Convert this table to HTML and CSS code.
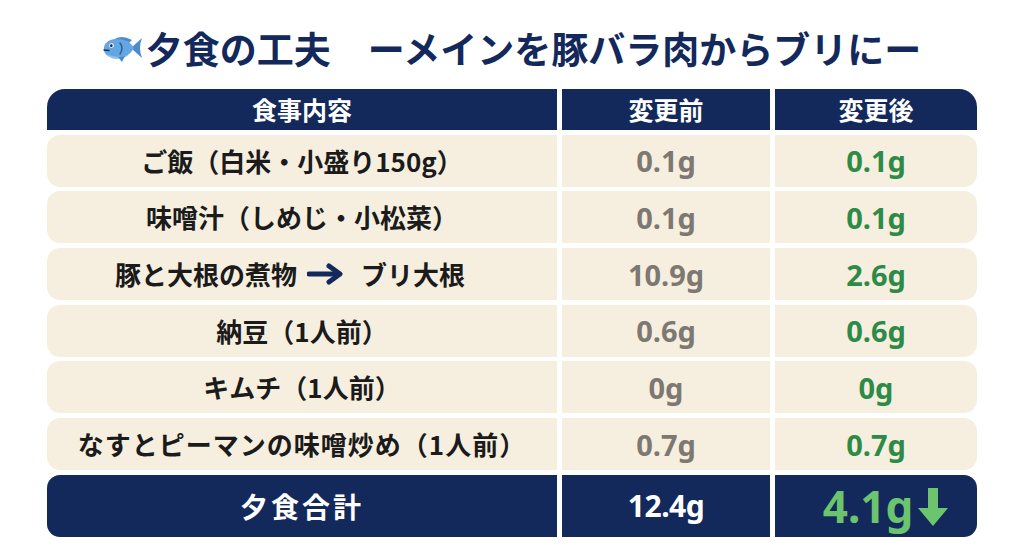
FILE: index.html
```html
<!DOCTYPE html>
<html lang="ja">
<head>
<meta charset="utf-8">
<title>夕食の工夫</title>
<link rel="stylesheet" href="styles.css">
</head>
<body>
<div class="page">
  <h1 class="title">
    <svg class="fish" viewBox="0 0 40 28" width="40" height="28" aria-hidden="true">
      <path d="M28 14 L39 4 Q35 14 39 24 Z" fill="#4a8bcc"/>
      <path d="M10 6 Q18 0 29 6 L26 9 L12 9 Z" fill="#4a8bcc"/>
      <path d="M1 13 Q3 5 14 5 Q26 5 31 14 Q26 24 14 24 Q3 24 1 17 Z" fill="#64a6e2"/>
      <path d="M4 20 Q12 25 26 21 Q20 25 12 25 Q6 24 4 20 Z" fill="#8fc0ec"/>
      <path d="M15 23 L19 28 L22 22 Z" fill="#4a8bcc"/>
      <path d="M17 9 Q21 14 17 20" stroke="#2c5f99" stroke-width="1.5" fill="none" stroke-linecap="round"/>
      <circle cx="8.5" cy="11.5" r="2.3" fill="#ffffff"/>
      <circle cx="8.3" cy="11.7" r="1.4" fill="#1b2d4a"/>
      <path d="M1 16 L6 16.5" stroke="#1b2d4a" stroke-width="1.3" stroke-linecap="round"/>
    </svg>
    <span>夕食の工夫　ーメインを豚バラ肉からブリにー</span>
  </h1>

  <div class="table">
    <div class="cell hd c1">食事内容</div>
    <div class="cell hd">変更前</div>
    <div class="cell hd c3">変更後</div>

    <div class="cell c1 item">ご飯（白米・小盛り150g）</div>
    <div class="cell num before">0.1g</div>
    <div class="cell c3 num after">0.1g</div>

    <div class="cell c1 item">味噌汁（しめじ・小松菜）</div>
    <div class="cell num before">0.1g</div>
    <div class="cell c3 num after">0.1g</div>

    <div class="cell c1 item swap">豚と大根の煮物<svg class="rarrow" viewBox="0 0 38 22" width="38" height="22" aria-hidden="true"><path d="M2 11 H30" stroke="#13295b" stroke-width="5" stroke-linecap="round"/><path d="M22 3 L33 11 L22 19" stroke="#13295b" stroke-width="5" fill="none" stroke-linecap="round" stroke-linejoin="round"/></svg>ブリ大根</div>
    <div class="cell num before">10.9g</div>
    <div class="cell c3 num after">2.6g</div>

    <div class="cell c1 item">納豆（1人前）</div>
    <div class="cell num before">0.6g</div>
    <div class="cell c3 num after">0.6g</div>

    <div class="cell c1 item">キムチ（1人前）</div>
    <div class="cell num before">0g</div>
    <div class="cell c3 num after">0g</div>

    <div class="cell c1 item wide">なすとピーマンの味噌炒め（1人前）</div>
    <div class="cell num before">0.7g</div>
    <div class="cell c3 num after">0.7g</div>

    <div class="cell total c1 total-label">夕食合計</div>
    <div class="cell total num total-before">12.4g</div>
    <div class="cell total c3 num total-after">4.1g<svg class="darrow" viewBox="0 0 32 40" width="32" height="40" aria-hidden="true"><path d="M11 1 H21 V21 H31 L16 39 L1 21 H11 Z" fill="#6cc46e"/></svg></div>
  </div>
</div>
</body>
</html>
```

FILE: styles.css
```css
* {
  box-sizing: border-box;
}

body {
  margin: 0;
  background: #ffffff;
  font-family: "Noto Sans CJK JP", "Noto Sans", sans-serif;
}

.page {
  width: 1024px;
  height: 559px;
  overflow: hidden;
}

.title {
  margin: 0;
  height: 89px;
  padding-top: 8px;
  display: flex;
  justify-content: center;
  align-items: center;
  gap: 3px;
  font-size: 37px;
  line-height: 1;
  font-weight: 700;
  color: #13295b;
}

.fish {
  display: block;
  flex: none;
  margin-top: -2px;
}

.table {
  width: 930px;
  margin: 0 auto;
  display: grid;
  grid-template-columns: 510px 208px 202px;
  grid-template-rows: 41px repeat(6, 52px) 62px;
  column-gap: 5px;
  row-gap: 4.7px;
}

.cell {
  display: flex;
  align-items: center;
  justify-content: center;
  background: #f6efdf;
  line-height: 1;
  font-weight: 700;
}

.hd {
  background: #13295b;
  color: #ffffff;
  font-size: 25px;
}

.hd.c1 {
  border-radius: 18px 0 0 0;
}

.hd.c3 {
  border-radius: 0 18px 0 0;
}

.c1 {
  border-radius: 13px 0 0 13px;
}

.c3 {
  border-radius: 0 13px 13px 0;
}

.item {
  font-size: 26px;
  color: #1b1b1b;
}

.wide {
  letter-spacing: 1px;
}

.swap {
  padding-right: 24px;
}

.rarrow {
  display: block;
  margin: 0 16px 0 10px;
}

.num {
  font-family: "Noto Sans", "Noto Sans CJK JP", sans-serif;
  font-size: 29px;
}

.before {
  color: #7d7872;
}

.after {
  color: #2e8b47;
}

.total {
  background: #13295b;
  color: #ffffff;
}

.total-label {
  font-size: 28px;
  letter-spacing: 3px;
}

.total-before {
  font-size: 30px;
  letter-spacing: -0.5px;
}

.total-after {
  font-size: 44px;
  color: #6cc46e;
  gap: 4px;
  padding-left: 20px;
}

.darrow {
  display: block;
  margin-top: 2px;
}
```
